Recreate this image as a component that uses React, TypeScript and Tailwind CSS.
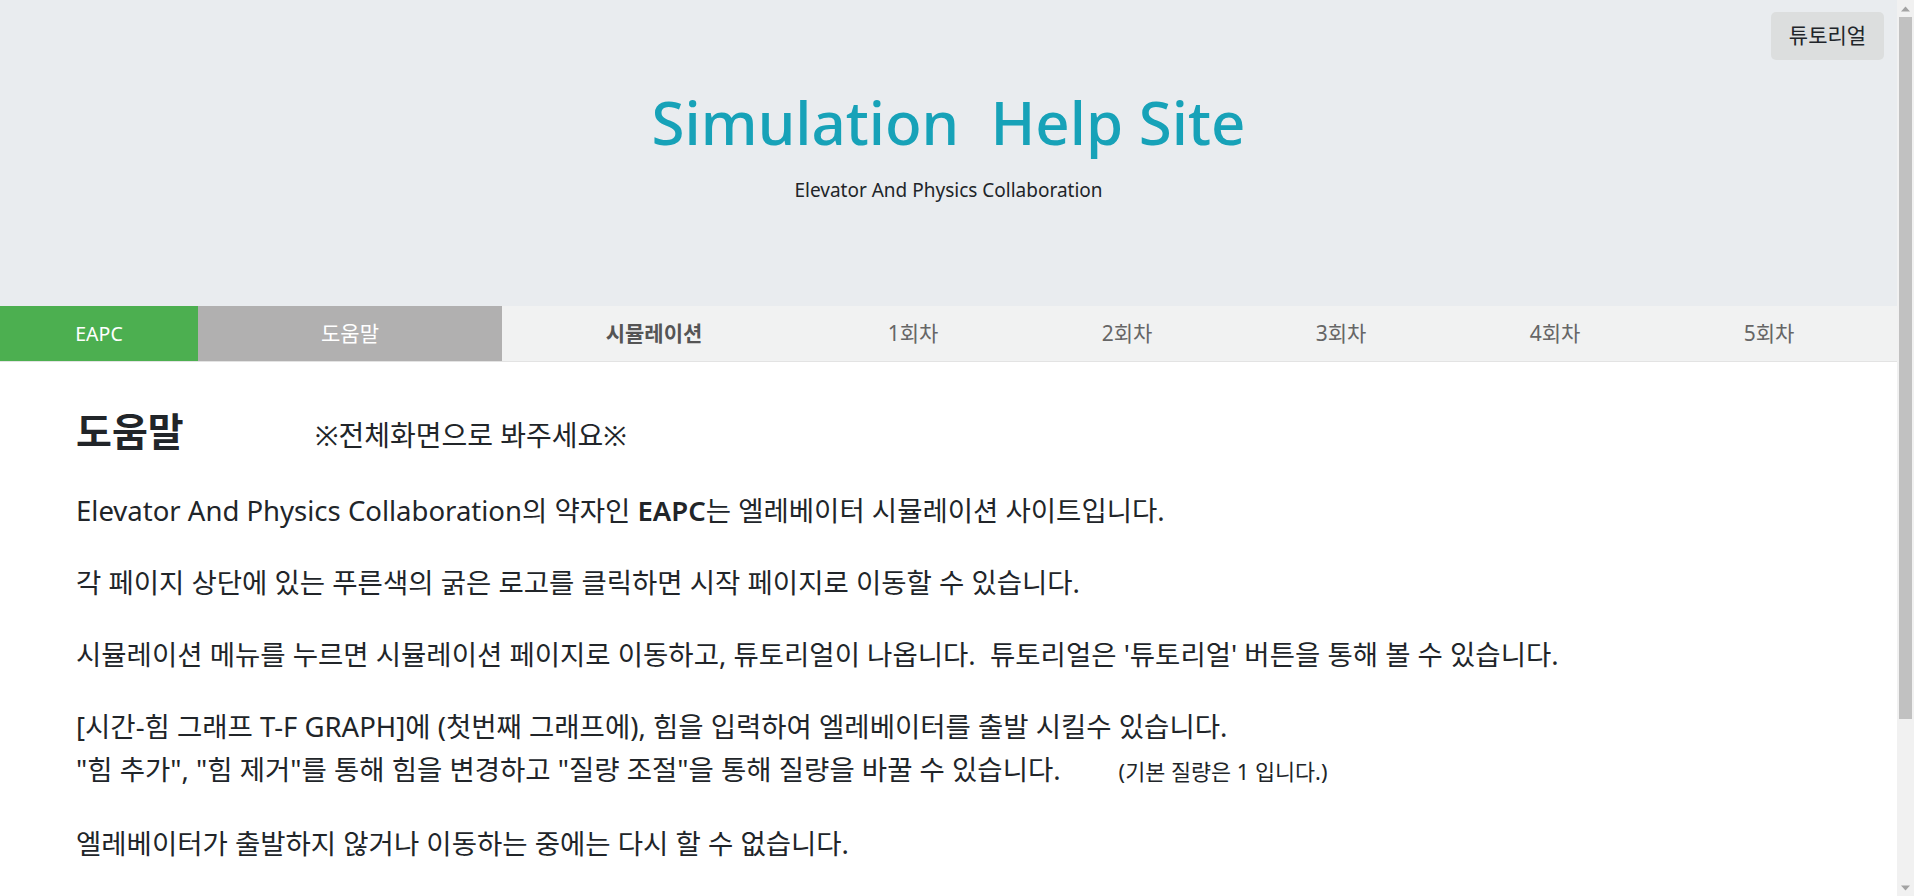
import React from 'react';

const navRounds = ['1회차', '2회차', '3회차', '4회차', '5회차'];

const Header = () => {
  return (
    <div className="relative bg-[#e9ecef] h-[306px] flex flex-col items-center pt-[84px]">
      <button className="absolute top-3 right-[13px] w-[113px] h-12 rounded-[5px] bg-[#dcdede] text-[#212529] text-[21px]">
        튜토리얼
      </button>
      <h1 className="text-[#17a2b8] text-[60px] leading-[76px] font-medium whitespace-pre">
        Simulation  Help Site
      </h1>
      <p className="mt-[15px] text-[19px] leading-[30px] text-[#212529]">
        Elevator And Physics Collaboration
      </p>
    </div>
  );
};

const NavBar = () => {
  return (
    <div className="flex h-[56px] bg-[#f1f2f2] border-b border-[#e3e3e3] text-[21px]">
      <div className="w-[198px] bg-[#4caf50] text-white text-[19.5px] flex items-center justify-center">EAPC</div>
      <div className="w-[304px] bg-[#b1b0b0] text-white flex items-center justify-center">도움말</div>
      <div className="w-[304px] text-[#555] font-bold flex items-center justify-center">시뮬레이션</div>
      {navRounds.map((r) => (
        <div key={r} className="w-[214px] text-[#666] flex items-center justify-center">
          {r}
        </div>
      ))}
    </div>
  );
};

const HelpContent = () => {
  return (
    <div className="pl-[76px] pt-[45px] text-[#212529] text-[27.5px] leading-[43px]">
      <div className="flex items-baseline h-[48px]">
        <h2 className="text-[39px] font-bold leading-[48px] w-[239px]">도움말</h2>
        <span className="text-[28px]">※전체화면으로 봐주세요※</span>
      </div>
      <div className="mt-[34px] flex flex-col gap-[29px]">
        <p>
          Elevator And Physics Collaboration의 약자인 <b className="font-semibold">EAPC</b>는 엘레베이터 시뮬레이션
          사이트입니다.
        </p>
        <p>각 페이지 상단에 있는 푸른색의 굵은 로고를 클릭하면 시작 페이지로 이동할 수 있습니다.</p>
        <p>
          시뮬레이션 메뉴를 누르면 시뮬레이션 페이지로 이동하고, 튜토리얼이 나옵니다.&nbsp; 튜토리얼은 '튜토리얼'
          버튼을 통해 볼 수 있습니다.
        </p>
        <p>
          [시간-힘 그래프 T-F GRAPH]에 (첫번째 그래프에), 힘을 입력하여 엘레베이터를 출발 시킬수 있습니다.
          <br />
          "힘 추가", "힘 제거"를 통해 힘을 변경하고 "질량 조절"을 통해 질량을 바꿀 수 있습니다.
          <span className="ml-[58px] text-[21.8px]">(기본 질량은 1 입니다.)</span>
        </p>
        <p>엘레베이터가 출발하지 않거나 이동하는 중에는 다시 할 수 없습니다.</p>
      </div>
    </div>
  );
};

const ScrollBar = () => {
  return (
    <div className="w-[17px] shrink-0 bg-[#f1f1f1] flex flex-col">
      <div className="h-[17px] flex items-center justify-center">
        <svg width="9" height="6" viewBox="0 0 9 6">
          <path d="M0 5.5 L4.5 0.5 L9 5.5 Z" fill="#a3a3a3" />
        </svg>
      </div>
      <div className="mx-[2px] h-[702px] bg-[#c1c1c1]" />
      <div className="flex-1" />
      <div className="h-[17px] flex items-center justify-center">
        <svg width="9" height="6" viewBox="0 0 9 6">
          <path d="M0 0.5 L4.5 5.5 L9 0.5 Z" fill="#a3a3a3" />
        </svg>
      </div>
    </div>
  );
};

export default function App() {
  return (
    <div className="font-['Noto_Sans','Noto_Sans_CJK_KR',sans-serif] bg-white h-screen flex overflow-hidden">
      <div className="flex-1 min-w-0 overflow-hidden">
        <Header />
        <NavBar />
        <HelpContent />
      </div>
      <ScrollBar />
    </div>
  );
}
